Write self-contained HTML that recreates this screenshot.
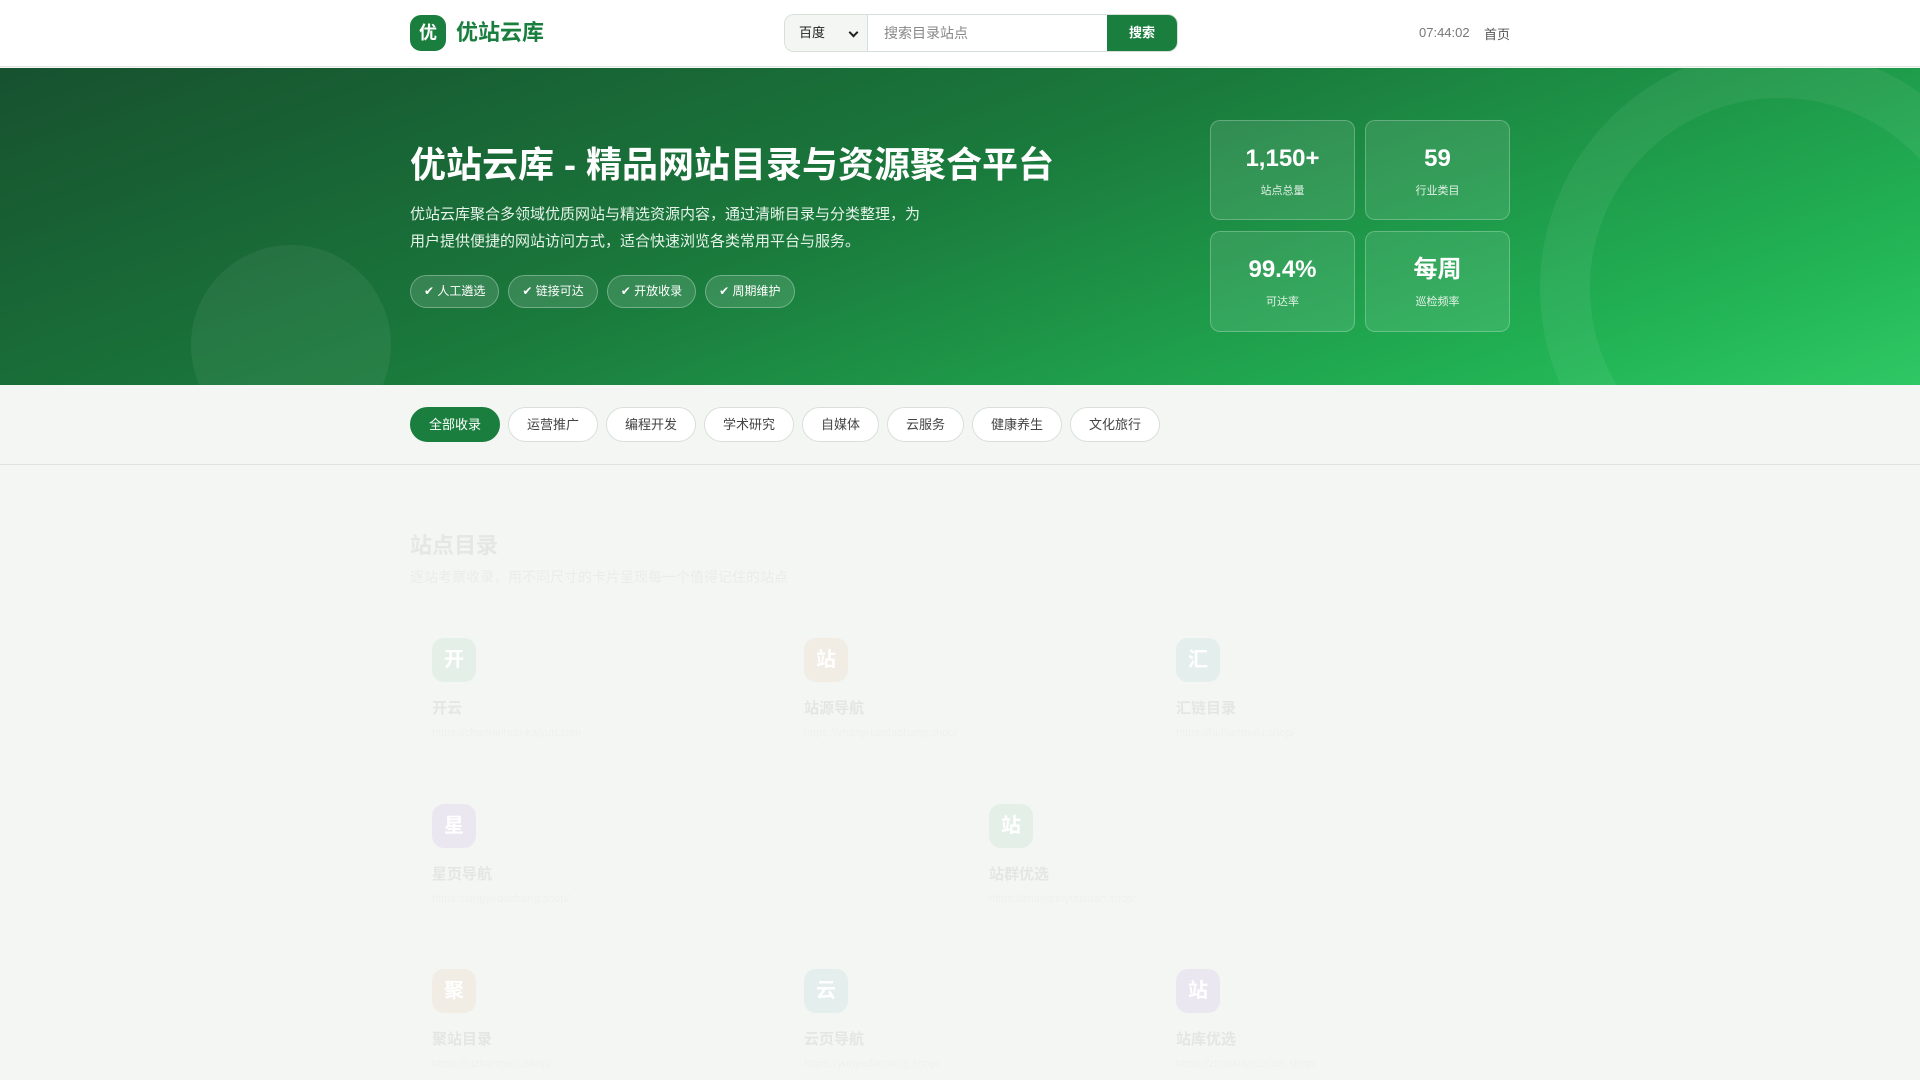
<!DOCTYPE html>
<html><head><meta charset="utf-8"><style>
*{box-sizing:border-box;margin:0;padding:0}
body{width:1920px;height:1080px;overflow:hidden;background:#f4f6f4;font-family:"Liberation Sans","Noto Sans CJK SC",sans-serif;}
.hdr{height:67px;background:#fff;position:relative;border-bottom:1px solid #e3e8e4}
.logo{position:absolute;left:410px;top:15px;width:36px;height:36px;border-radius:11px;background:#1a7f3e;color:#fff;font-weight:bold;font-size:18px;text-align:center;line-height:36px}
.logot{position:absolute;left:456px;top:15px;font-size:22px;font-weight:bold;color:#1a7f3e;line-height:36px}
.search{position:absolute;left:784px;top:14px;width:394px;height:38px;border:1px solid #d6dfd8;border-radius:10px;overflow:hidden;display:flex}
.sel{width:83px;background:#f3f6f3;border-right:1px solid #d6dfd8;font-size:13px;line-height:36px;padding-left:14px;color:#222;position:relative}
.sel:after{content:"";position:absolute;right:10px;top:14px;width:5px;height:5px;border-right:2px solid #222;border-bottom:2px solid #222;transform:rotate(45deg)}
.inp{flex:1;font-size:14px;color:#888;line-height:36px;padding-left:16px}
.btn{width:70px;background:#1a7f3e;color:#fff;font-size:13px;font-weight:bold;text-align:center;line-height:36px}
.tm{position:absolute;left:1419px;top:25px;font-size:13px;color:#777}
.home{position:absolute;left:1484px;top:24px;font-size:13px;color:#555}
.hero{position:absolute;top:68px;left:0;width:1920px;height:317px;overflow:hidden;background:linear-gradient(160deg,#17512f 0%,#1a7a3c 45%,#22b455 85%,#2fc865 100%)}
.c1{position:absolute;left:191px;top:177px;width:200px;height:200px;border-radius:50%;background:rgba(255,255,255,.06)}
.c2{position:absolute;left:1540px;top:-20px;width:480px;height:480px;border-radius:50%;border:50px solid rgba(255,255,255,.06)}
.h1{position:absolute;left:410px;top:68px;font-size:36px;font-weight:bold;color:#fff}
.desc{position:absolute;left:410px;top:133px;width:520px;font-size:15px;line-height:27px;color:#e6f3ea}
.tags{position:absolute;left:410px;top:207px;display:flex;gap:9px}
.tag{height:33px;border-radius:17px;border:1px solid rgba(255,255,255,.3);background:rgba(255,255,255,.13);color:#fff;font-size:12px;line-height:31px;padding:0 13px}
.st{position:absolute;width:145px;border-radius:10px;border:1px solid rgba(255,255,255,.25);background:rgba(255,255,255,.1);color:#fff;text-align:center}
.st b{display:block;font-size:24px;margin-top:23px;line-height:30px;height:30px}
.st span{display:block;font-size:11px;margin-top:8px;color:#e3f2e7}
.cats{position:absolute;top:385px;left:0;width:1920px;height:80px;border-bottom:1px solid #dde3de;background:#f4f6f4}
.pill{position:absolute;top:22px;height:35px;border-radius:18px;border:1px solid #d9e0da;background:#fff;font-size:13px;color:#444;text-align:center;line-height:33px}
.pill.on{background:#1a7f3e;color:#fff;border-color:#1a7f3e}
.sec{position:absolute;left:410px;top:528px;font-size:22px;font-weight:bold;color:#e3e8e4}
.sub{position:absolute;left:410px;top:567px;font-size:14px;color:#e9ede9}
.card{position:absolute}
.ic{width:44px;height:44px;border-radius:12px;color:#fff;font-weight:bold;font-size:20px;text-align:center;line-height:44px}
.ct{font-size:15px;font-weight:bold;color:#e3e7e4;margin-top:15px}
.cu{font-size:11px;color:#eef1ee;margin-top:9px}
</style></head><body>
<div class="hdr">
<div class="logo">优</div><div class="logot">优站云库</div>
<div class="search"><div class="sel">百度</div><div class="inp">搜索目录站点</div><div class="btn">搜索</div></div>
<div class="tm">07:44:02</div><div class="home">首页</div>
</div>
<div class="hero">
<div class="c1"></div><div class="c2"></div>
<div class="h1">优站云库 - 精品网站目录与资源聚合平台</div>
<div class="desc">优站云库聚合多领域优质网站与精选资源内容，通过清晰目录与分类整理，为用户提供便捷的网站访问方式，适合快速浏览各类常用平台与服务。</div>
<div class="tags"><div class="tag">✔ 人工遴选</div><div class="tag">✔ 链接可达</div><div class="tag">✔ 开放收录</div><div class="tag">✔ 周期维护</div></div>
<div class="st" style="left:1210px;top:52px;height:100px"><b>1,150+</b><span>站点总量</span></div>
<div class="st" style="left:1365px;top:52px;height:100px"><b>59</b><span>行业类目</span></div>
<div class="st" style="left:1210px;top:163px;height:101px"><b>99.4%</b><span>可达率</span></div>
<div class="st" style="left:1365px;top:163px;height:101px"><b>每周</b><span>巡检频率</span></div>
</div>
<div class="cats">
<div class="pill on" style="left:410px;width:90px">全部收录</div>
<div class="pill" style="left:508px;width:90px">运营推广</div>
<div class="pill" style="left:606px;width:90px">编程开发</div>
<div class="pill" style="left:704px;width:90px">学术研究</div>
<div class="pill" style="left:802px;width:77px">自媒体</div>
<div class="pill" style="left:887px;width:77px">云服务</div>
<div class="pill" style="left:972px;width:90px">健康养生</div>
<div class="pill" style="left:1070px;width:90px">文化旅行</div>
</div>
<div class="sec">站点目录</div>
<div class="sub">逐站考察收录，用不同尺寸的卡片呈现每一个值得记住的站点</div>
<div class="card" style="left:432px;top:638px"><div class="ic" style="background:#e4f0e7">开</div><div class="ct">开云</div><div class="cu">https://channelhub-kaiyun.com</div></div>
<div class="card" style="left:804px;top:638px"><div class="ic" style="background:#f1ece4">站</div><div class="ct">站源导航</div><div class="cu">https://zhanyuandaohang.shop/</div></div>
<div class="card" style="left:1176px;top:638px"><div class="ic" style="background:#e4eeec">汇</div><div class="ct">汇链目录</div><div class="cu">https://huilianmulu.shop/</div></div>
<div class="card" style="left:432px;top:804px"><div class="ic" style="background:#ebe7f1">星</div><div class="ct">星页导航</div><div class="cu">https://xingyedaohang.shop/</div></div>
<div class="card" style="left:989px;top:804px"><div class="ic" style="background:#e4f0e7">站</div><div class="ct">站群优选</div><div class="cu">https://zhanqunyouxuan.shop/</div></div>
<div class="card" style="left:432px;top:969px"><div class="ic" style="background:#f1ece4">聚</div><div class="ct">聚站目录</div><div class="cu">https://juzhanmulu.shop/</div></div>
<div class="card" style="left:804px;top:969px"><div class="ic" style="background:#e4eeec">云</div><div class="ct">云页导航</div><div class="cu">https://yunyedaohang.shop/</div></div>
<div class="card" style="left:1176px;top:969px"><div class="ic" style="background:#ebe7f1">站</div><div class="ct">站库优选</div><div class="cu">https://zhankuyouxuan.shop/</div></div>
</body></html>
